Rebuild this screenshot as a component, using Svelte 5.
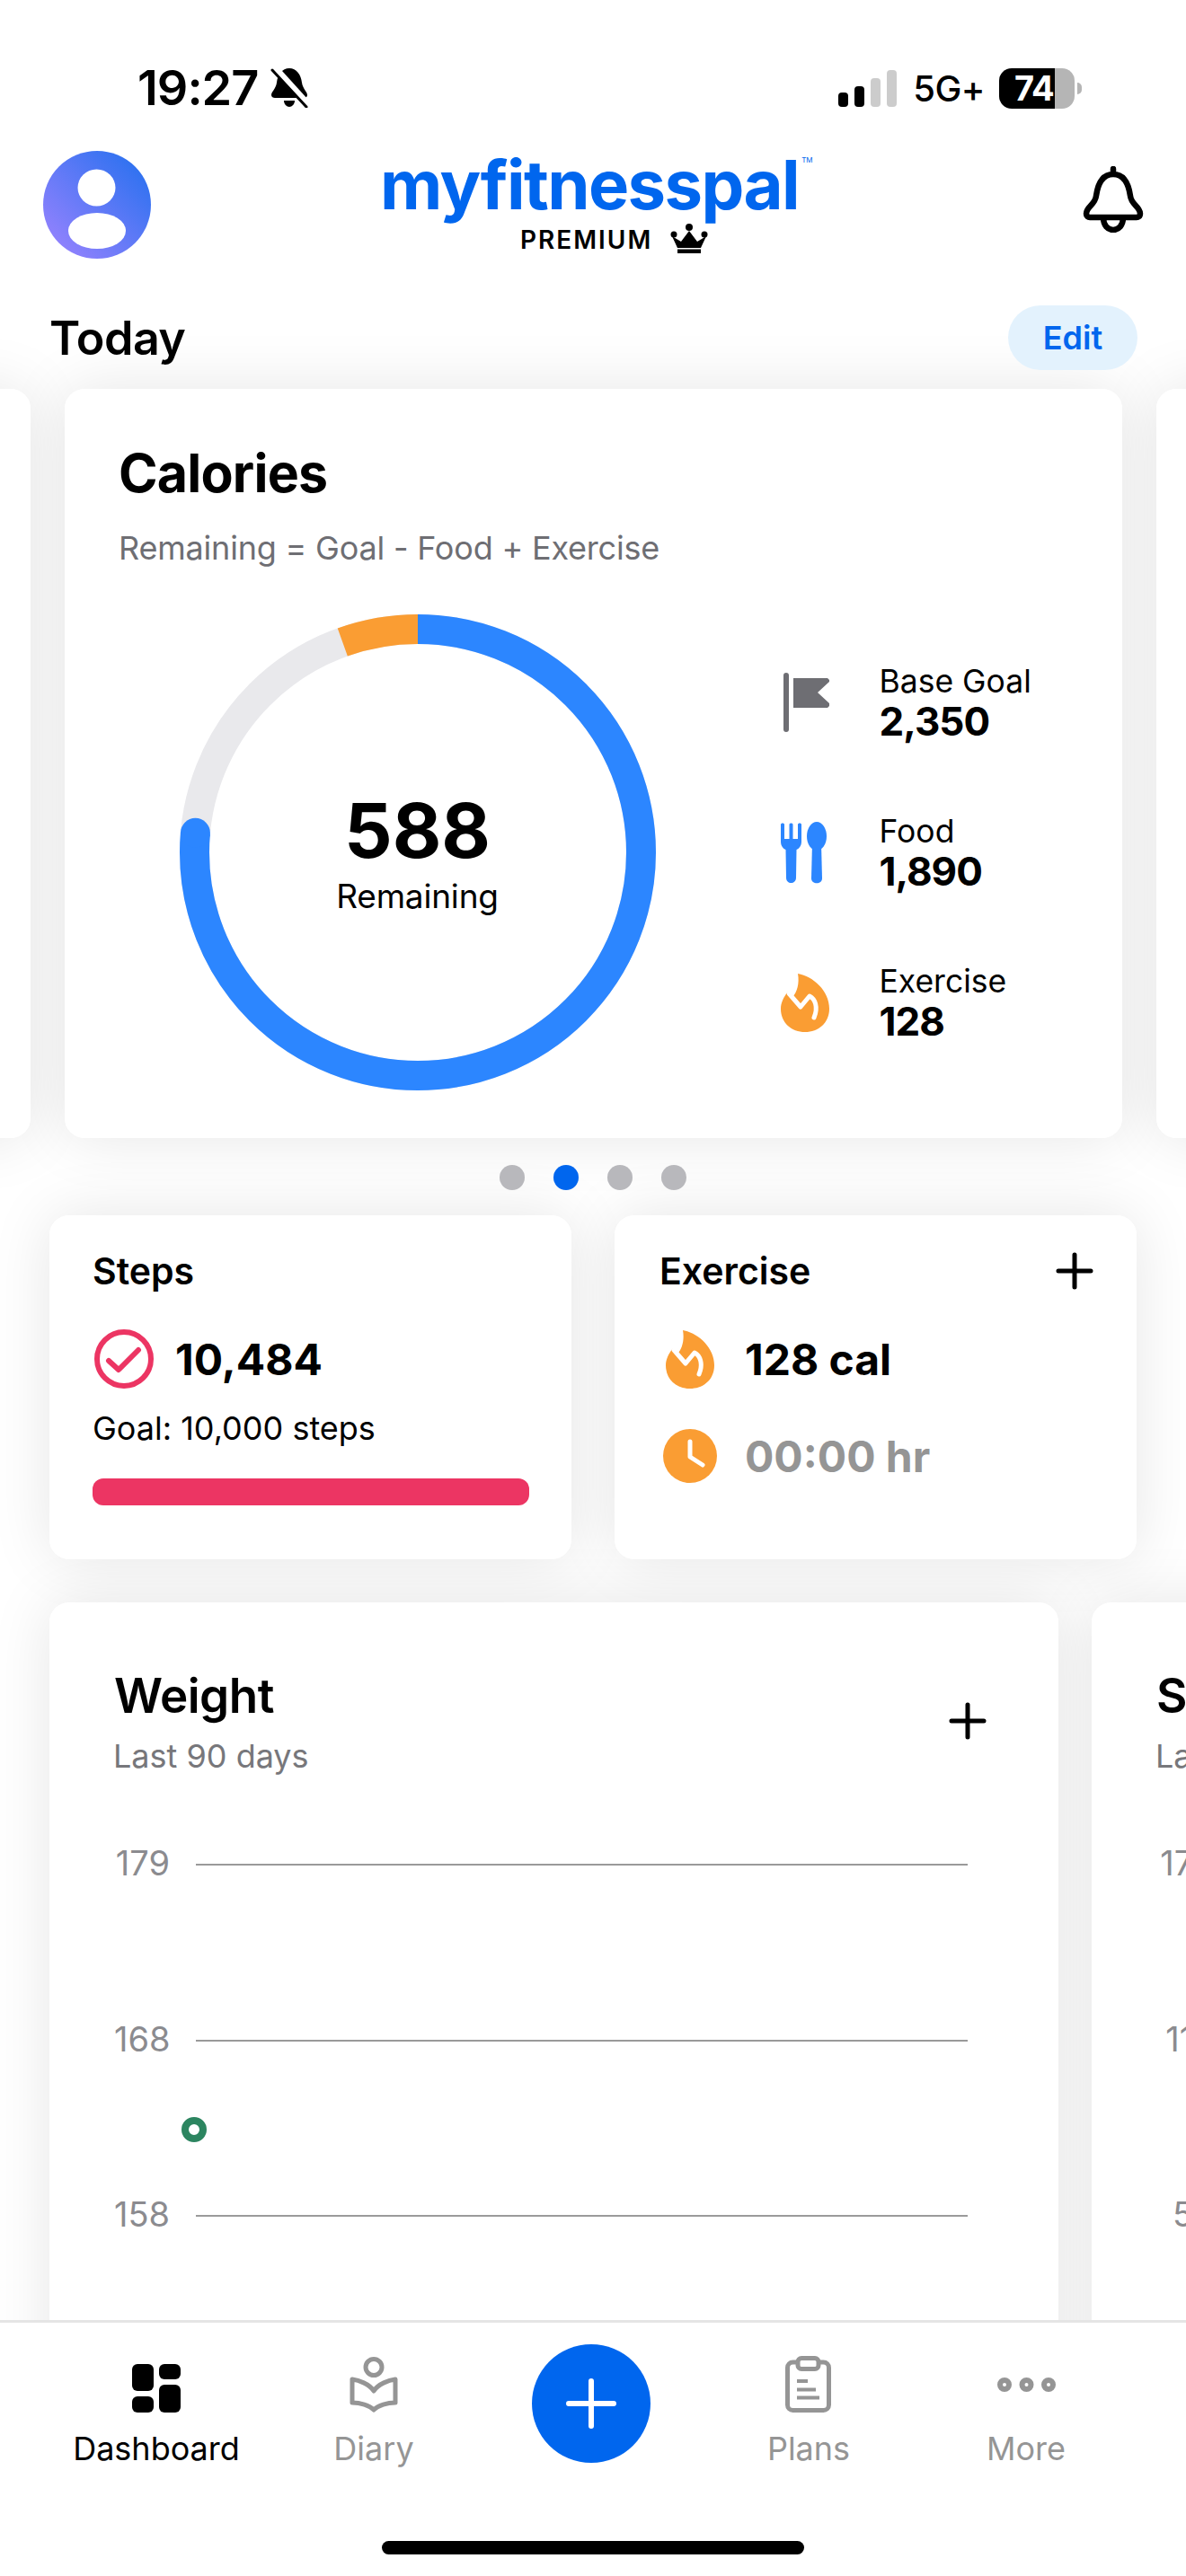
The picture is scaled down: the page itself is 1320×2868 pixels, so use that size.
<script>
  const stats = [
    { label: "Base Goal", value: "2,350", icon: "flag" },
    { label: "Food", value: "1,890", icon: "food" },
    { label: "Exercise", value: "128", icon: "flame" },
  ];
  const tabsLeft = [
    { label: "Dashboard", icon: "dash", active: true },
    { label: "Diary", icon: "diary" },
  ];
  const tabsRight = [
    { label: "Plans", icon: "plans" },
    { label: "More", icon: "more" },
  ];
  const charts = [
    { title: "Weight", ticks: ["179", "168", "158"], dot: true },
    { title: "Steps", ticks: ["17k", "11k", "5k"], dot: false },
  ];

  // ring geometry
  const r = 248.5;
  const blueEnd = 275;
  const orangeLen = 19.7;
  const capX = 265 + r * Math.sin((blueEnd * Math.PI) / 180);
  const capY = 265 - r * Math.cos((blueEnd * Math.PI) / 180);
</script>

{#snippet flame()}
  <svg width="54" height="66" viewBox="0 0 54 66">
    <path fill="#fa9d33" d="M19 1C36 4 54 20 54 40C54 56 42 66 27 66C12 66 0 56 0 40C0 34 3 27 8 21L13 27C18 22 21 12 19 1Z" />
    <path fill="none" stroke="#fff" stroke-width="5" stroke-linecap="round" stroke-linejoin="round" d="M9 23L22 38L32 26C38 29 42 38 37 50" />
  </svg>
{/snippet}

{#snippet plus()}
  <svg width="42" height="42" viewBox="0 0 42 42">
    <path fill="none" stroke="#000" stroke-width="5" stroke-linecap="round" d="M21 3V39M3 21H39" />
  </svg>
{/snippet}

<div class="app">
  <div class="scroll">
    <div class="status">
      <span class="time">19:27</span>
      <svg class="mute" width="42" height="45" viewBox="0 0 42 45">
        <path d="M21 1C13 1 8 8 7 17C6 24 1 27 1 31C1 33 3 34 5 34H37C39 34 41 33 41 31C41 27 36 24 35 17C34 8 29 1 21 1Z" />
        <path d="M15 37H27C27 41 24 44 21 44C18 44 15 41 15 37Z" />
        <path stroke="#fff" stroke-width="8" d="M4 0L42 42" />
        <path stroke="#000" stroke-width="3" stroke-linecap="round" d="M2 3L40 44" />
      </svg>
      <div class="status-right">
        <svg width="65" height="41" viewBox="0 0 65 41">
          <rect x="0" y="25" width="11" height="16" rx="4" />
          <rect x="18" y="18" width="11" height="23" rx="4" />
          <rect x="36" y="9" width="11" height="32" rx="4" fill="#ccc" />
          <rect x="54" y="0" width="11" height="41" rx="4" fill="#ccc" />
        </svg>
        <span class="net">5G+</span>
        <div class="battery"><span>74</span></div>
        <div class="nub"></div>
      </div>
    </div>

    <header class="top">
      <svg class="avatar" width="120" height="120" viewBox="0 0 120 120">
        <defs>
          <linearGradient id="av" x1="1" y1="0" x2="0" y2="1">
            <stop offset="0" stop-color="#1f6fee" />
            <stop offset="1" stop-color="#a084ff" />
          </linearGradient>
        </defs>
        <circle cx="60" cy="60" r="60" fill="url(#av)" />
        <ellipse cx="59.5" cy="41" rx="21" ry="20.5" fill="#fff" />
        <ellipse cx="60" cy="89" rx="32" ry="20" fill="#fff" />
      </svg>
      <div class="brand">
        <div class="logo">myfitnesspal<sup>TM</sup></div>
        <div class="premium">
          <span>PREMIUM</span>
          <svg width="42" height="33" viewBox="0 0 42 33">
            <path d="M8 27L2 14L12 20L21 8L30 20L40 14L34 27Z" />
            <rect x="8" y="28.5" width="26" height="4.5" />
            <circle cx="21" cy="4" r="4" />
            <circle cx="4" cy="12" r="3.5" />
            <circle cx="38" cy="12" r="3.5" />
          </svg>
        </div>
      </div>
      <svg class="bell" width="68" height="74" viewBox="0 0 68 74">
        <path fill="none" stroke="#000" stroke-width="6.5" stroke-linecap="round" stroke-linejoin="round"
          d="M34 3V9M34 9C22 9 17 19 15 33C14 43 4 45 4 53C4 56 6 57 8 57H60C62 57 64 56 64 53C64 45 54 43 53 33C51 19 46 9 34 9ZM23 57C23 66 28 71 34 71C40 71 45 66 45 57" />
      </svg>
    </header>

    <div class="today">
      <h2>Today</h2>
      <div class="edit">Edit</div>
    </div>

    <div class="carousel">
      <div class="card side"></div>
      <section class="card calories">
        <h1>Calories</h1>
        <p class="formula">Remaining = Goal - Food + Exercise</p>
        <div class="cal-body">
          <div class="ring">
            <svg width="530" height="530" viewBox="0 0 530 530">
              <circle cx="265" cy="265" {r} fill="none" stroke="#e9e9ec" stroke-width="33" />
              <g transform="rotate(-90 265 265)" fill="none" stroke-width="33">
                <circle cx="265" cy="265" {r} pathLength="360" stroke="#fa9d33"
                  stroke-dasharray="{orangeLen} 360" stroke-dashoffset={orangeLen - 360} />
                <circle cx="265" cy="265" {r} pathLength="360" stroke="#2c86ff"
                  stroke-dasharray="{blueEnd} 360" />
              </g>
              <circle cx={capX} cy={capY} r="16.5" fill="#2c86ff" />
            </svg>
            <div class="ring-text">
              <div class="big">588</div>
              <div class="rem">Remaining</div>
            </div>
          </div>
          <div class="stats">
            {#each stats as s}
              <div class="stat">
                <div class="stat-icon">
                  {#if s.icon === "flag"}
                    <svg width="54" height="66" viewBox="0 0 54 66">
                      <rect x="3" y="0" width="6" height="66" rx="3" fill="#6e6e73" />
                      <path fill="#6e6e73" d="M14 6H52L54 8V10L41 22L54 34V37L52 39H14Z" />
                    </svg>
                  {:else if s.icon === "food"}
                    <svg width="54" height="69" viewBox="0 0 54 69">
                      <path fill="#2c86ff" d="M0 3C0 1 4 1 4 3V19H9.5V3C9.5 1 13.5 1 13.5 3V19H19V3C19 1 23 1 23 3V22C23 27 20 30 17.500 31L17 62C17 70 6 70 6 62L5.500 31C3 30 0 27 0 22Z" />
                      <ellipse cx="40" cy="16" rx="11" ry="16" fill="#2c86ff" />
                      <path fill="#2c86ff" d="M35 24H45L46 63C46 70 34 70 34 63Z" />
                    </svg>
                  {:else}
                    {@render flame()}
                  {/if}
                </div>
                <div class="stat-text">
                  <div class="stat-label">{s.label}</div>
                  <div class="stat-value">{s.value}</div>
                </div>
              </div>
            {/each}
          </div>
        </div>
      </section>
      <div class="card side"></div>
    </div>

    <div class="dots">
      <i></i><i class="on"></i><i></i><i></i>
    </div>

    <div class="pair">
      <section class="card small steps">
        <h3>Steps</h3>
        <div class="metric">
          <svg width="66" height="66" viewBox="0 0 66 66">
            <circle cx="33" cy="33" r="30" fill="none" stroke="#ec3563" stroke-width="6" />
            <path fill="none" stroke="#ec3563" stroke-width="6" stroke-linecap="round" stroke-linejoin="round" d="M16 35L27 45L49 23" />
          </svg>
          <span>10,484</span>
        </div>
        <p class="goal">Goal: 10,000 steps</p>
        <div class="bar"></div>
      </section>
      <section class="card small exercise">
        <div class="small-head">
          <h3>Exercise</h3>
          {@render plus()}
        </div>
        <div class="ex-row first">
          <div class="ex-icon">{@render flame()}</div>
          <span>128 cal</span>
        </div>
        <div class="ex-row second">
          <div class="ex-icon">
            <svg width="60" height="60" viewBox="0 0 60 60">
              <circle cx="30" cy="30" r="30" fill="#fa9d33" />
              <path fill="none" stroke="#fff" stroke-width="5" stroke-linecap="round" stroke-linejoin="round" d="M30 14V31L44 40" />
            </svg>
          </div>
          <span class="muted">00:00 hr</span>
        </div>
      </section>
    </div>

    <div class="charts">
      {#each charts as c}
        <section class="card chart-card">
          <div class="chart-head">
            <div>
              <h2 class="chart-title">{c.title}</h2>
              <p class="chart-sub">Last 90 days</p>
            </div>
            {@render plus()}
          </div>
          <div class="chart">
            {#each c.ticks as t}
              <div class="tick"><span>{t}</span><div class="rule"></div></div>
            {/each}
            {#if c.dot}<div class="point"></div>{/if}
          </div>
        </section>
      {/each}
    </div>
  </div>

  <nav class="tabbar">
    <div class="tabs">
      {#each tabsLeft as t}
        <div class="tab" class:active={t.active}>
          <div class="tab-icon">
            {#if t.icon === "dash"}
              <svg width="54" height="54" viewBox="0 0 54 54">
                <rect x="0" y="0" width="24" height="30" rx="6" />
                <rect x="0" y="36" width="24" height="18" rx="6" />
                <rect x="30" y="0" width="24" height="17" rx="6" />
                <rect x="30" y="23" width="24" height="31" rx="6" />
              </svg>
            {:else}
              <svg width="54" height="62" viewBox="0 0 54 62">
                <circle cx="27" cy="11.500" r="9" fill="none" stroke="#959595" stroke-width="5" />
                <path fill="none" stroke="#959595" stroke-width="5" stroke-linejoin="round" d="M3 25C10 26 22 30 27 38C32 30 44 26 51 25V51C42 51 32 54 27 59C22 54 12 51 3 51Z" />
              </svg>
            {/if}
          </div>
          <span>{t.label}</span>
        </div>
      {/each}
      <div class="fab">
        <svg width="56" height="56" viewBox="0 0 56 56">
          <path fill="none" stroke="#fff" stroke-width="6" stroke-linecap="round" d="M28 3V53M3 28H53" />
        </svg>
      </div>
      {#each tabsRight as t}
        <div class="tab">
          <div class="tab-icon">
            {#if t.icon === "plans"}
              <svg width="51" height="63" viewBox="0 0 51 63">
                <rect x="2.500" y="7" width="46" height="53.500" rx="6" fill="none" stroke="#959595" stroke-width="5" />
                <rect x="14" y="2.500" width="23" height="12" rx="4" fill="#fff" stroke="#959595" stroke-width="5" />
                <path stroke="#959595" stroke-width="4" d="M13 28H25M13 37.500H34M13 46.500H38" />
              </svg>
            {:else}
              <svg class="more" width="65" height="16" viewBox="0 0 65 16">
                <g fill="none" stroke="#959595" stroke-width="6">
                  <circle cx="8" cy="8" r="5" />
                  <circle cx="32.500" cy="8" r="5" />
                  <circle cx="57" cy="8" r="5" />
                </g>
              </svg>
            {/if}
          </div>
          <span>{t.label}</span>
        </div>
      {/each}
    </div>
    <div class="home"></div>
  </nav>
</div>

<style>
  :global(body) {
    margin: 0;
    background: #fff;
  }
  * {
    box-sizing: border-box;
  }
  h1, h2, h3, p {
    margin: 0;
    font: inherit;
  }
  svg {
    display: block;
    flex-shrink: 0;
  }
  .app {
    width: 1320px;
    height: 2868px;
    display: flex;
    flex-direction: column;
    overflow: hidden;
    isolation: isolate;
    background: #fff;
    color: #000;
    font-family: Inter, "Liberation Sans", sans-serif;
  }
  .scroll {
    flex: 1;
    min-height: 0;
    overflow: hidden;
  }

  .status {
    height: 168px;
    padding: 72px 116px 0 153px;
    display: flex;
    align-items: flex-start;
  }
  .time {
    font-size: 54px;
    line-height: 52px;
    font-weight: 600;
    letter-spacing: -1px;
  }
  .mute {
    margin: 3px 0 0 14px;
  }
  .status-right {
    margin-left: auto;
    display: flex;
    align-items: center;
    height: 52px;
  }
  .net {
    font-size: 40px;
    font-weight: 500;
    margin-left: 18px;
    letter-spacing: -0.5px;
  }
  .battery {
    width: 84px;
    height: 45px;
    margin-left: 16px;
    border-radius: 14px;
    background: linear-gradient(90deg, #000 62px, #b5b5b5 62px);
    color: #fff;
    font-size: 38px;
    font-weight: 700;
    display: flex;
    align-items: center;
    padding-left: 17px;
    letter-spacing: -1px;
  }
  .nub {
    width: 5px;
    height: 13px;
    margin-left: 3px;
    border-radius: 0 6px 6px 0;
    background: #b5b5b5;
  }

  .top {
    height: 120px;
    padding: 0 47px 0 48px;
    display: flex;
    align-items: flex-start;
  }
  .brand {
    margin-left: 255px;
    width: 480px;
  }
  .logo {
    color: #0066ee;
    font-size: 76px;
    line-height: 76px;
    font-weight: 700;
    letter-spacing: -1.6px;
    white-space: nowrap;
    margin-top: -1px;
  }
  .logo sup {
    font-size: 8px;
    line-height: 0;
    vertical-align: 52px;
    letter-spacing: 0;
    font-weight: 400;
    margin-left: 3px;
  }
  .premium {
    display: flex;
    align-items: flex-end;
    gap: 20px;
    margin: 6px 0 0 156px;
    font-size: 28px;
    line-height: 30px;
    font-weight: 600;
    letter-spacing: 2px;
  }
  .bell {
    margin: 17px 0 0 auto;
  }

  .today {
    margin-top: 52px;
    height: 72px;
    padding: 0 54px 0 55px;
    display: flex;
    justify-content: space-between;
    align-items: center;
  }
  .today h2 {
    font-size: 52px;
    font-weight: 600;
    letter-spacing: -0.5px;
  }
  .edit {
    width: 144px;
    height: 72px;
    border-radius: 36px;
    background: #e3f2fd;
    color: #0066ee;
    font-size: 36px;
    font-weight: 600;
    display: flex;
    align-items: center;
    justify-content: center;
  }

  .card {
    position: relative;
    background: #fff;
    border-radius: 22px;
  }
  /* shadow lives on its own layer so a later card never darkens an earlier one */
  .card::before {
    content: "";
    position: absolute;
    inset: 0;
    z-index: -1;
    border-radius: 22px;
    box-shadow: 0 0 68px rgba(0, 0, 0, 0.1);
  }
  .carousel {
    margin: 21px 0 0 -1143px;
    display: flex;
    gap: 38px;
  }
  .carousel .card {
    flex: 0 0 1177px;
    height: 834px;
  }
  .calories {
    padding: 59px 0 0 60px;
  }
  .calories h1 {
    font-size: 59px;
    line-height: 70px;
    font-weight: 700;
    letter-spacing: -0.8px;
  }
  .formula {
    margin-top: 26px;
    font-size: 36px;
    line-height: 44px;
    letter-spacing: -0.2px;
    color: #6e6e73;
  }
  .cal-body {
    margin: 52px 0 0 67.500px;
    display: flex;
    align-items: center;
    gap: 139px;
  }
  .ring {
    display: grid;
    place-items: center;
  }
  .ring > * {
    grid-area: 1 / 1;
  }
  .ring-text {
    text-align: center;
  }
  .big {
    font-size: 84px;
    line-height: 92px;
    font-weight: 700;
  }
  .rem {
    font-size: 37px;
    line-height: 44px;
    margin-top: 5px;
    letter-spacing: -0.2px;
  }
  .stats {
    display: flex;
    flex-direction: column;
    gap: 82px;
  }
  .stat {
    display: flex;
    align-items: center;
  }
  .stat-icon {
    width: 110px;
  }
  .stat-text {
    margin-top: -4px;
  }
  .stat-label {
    font-size: 35.500px;
    line-height: 45px;
  }
  .stat-value {
    font-size: 44px;
    line-height: 44px;
    font-weight: 700;
    letter-spacing: -1px;
  }

  .dots {
    margin-top: 30px;
    display: flex;
    justify-content: center;
    gap: 32px;
  }
  .dots i {
    width: 28px;
    height: 28px;
    border-radius: 50%;
    background: #b8b8bc;
  }
  .dots .on {
    background: #0066ee;
  }

  .pair {
    margin-top: 28px;
    padding-left: 55px;
    display: grid;
    grid-template-columns: 581px 581px;
    gap: 48px;
  }
  .small {
    height: 383px;
    padding: 38px 48px 0;
  }
  .small h3 {
    font-size: 41px;
    line-height: 48px;
    font-weight: 600;
  }
  .metric {
    margin: 41px 0 0 2px;
    display: flex;
    align-items: center;
    gap: 24px;
    font-size: 48px;
    font-weight: 700;
  }
  .goal {
    margin-top: 24px;
    font-size: 36px;
    line-height: 40px;
  }
  .bar {
    margin-top: 36px;
    height: 30px;
    width: 486px;
    border-radius: 12px;
    background: #ec3563;
  }
  .exercise {
    padding: 38px 48px 0 50px;
  }
  .small-head {
    display: flex;
    justify-content: space-between;
    align-items: center;
  }
  .ex-row {
    margin-left: 4px;
    display: flex;
    align-items: center;
    gap: 31px;
    font-size: 48px;
    font-weight: 700;
  }
  .ex-row.first {
    margin-top: 41px;
  }
  .ex-row.second {
    margin-top: 45px;
  }
  .ex-icon {
    width: 60px;
    display: flex;
    justify-content: center;
  }
  .muted {
    color: #959595;
  }

  .charts {
    margin-top: 48px;
    padding-left: 55px;
    display: flex;
    gap: 37px;
  }
  .chart-card {
    flex: 0 0 1123px;
    height: 1000px;
    padding: 71px 80px 0 72px;
  }
  .chart-head {
    display: flex;
    justify-content: space-between;
    align-items: center;
  }
  .chart-title {
    font-size: 53px;
    line-height: 66px;
    font-weight: 600;
    letter-spacing: -0.5px;
  }
  .chart-sub {
    margin: 12px 0 0 -1px;
    font-size: 36px;
    line-height: 44px;
    color: #77777b;
  }
  .chart {
    position: relative;
    margin-top: 75px;
    display: flex;
    flex-direction: column;
    gap: 151.500px;
  }
  .tick {
    display: flex;
    align-items: center;
    height: 44px;
    gap: 29px;
    font-size: 38px;
    color: #8b8b8f;
  }
  .tick span {
    width: 62px;
    flex-shrink: 0;
    white-space: nowrap;
    text-align: right;
  }
  .rule {
    flex: 0 0 859px;
    height: 2px;
    margin-top: 4px;
    background: #9a9a9a;
  }
  .point {
    position: absolute;
    left: 75px;
    top: 305px;
    width: 28px;
    height: 28px;
    border-radius: 50%;
    border: 8px solid #2c8560;
    background: #fff;
  }

  .tabbar {
    flex: 0 0 285px;
    border-top: 3px solid #e5e5e5;
    background: #fff;
    position: relative;
  }
  .tabs {
    height: 243px;
    padding-left: 53px;
    display: grid;
    grid-template-columns: repeat(5, 242px);
    align-items: start;
    justify-items: center;
  }
  .tab {
    display: flex;
    flex-direction: column;
    align-items: center;
    color: #959595;
    font-size: 36px;
    line-height: 44px;
  }
  .tab.active {
    color: #000;
  }
  .tab-icon {
    height: 100px;
    display: flex;
    align-items: flex-end;
  }
  .more {
    margin-bottom: 23px;
  }
  .tab span {
    margin-top: 18px;
  }
  .fab {
    margin-top: 24px;
    width: 132px;
    height: 132px;
    border-radius: 50%;
    background: #0066ee;
    display: flex;
    align-items: center;
    justify-content: center;
  }
  .home {
    width: 470px;
    height: 15px;
    margin: 0 auto;
    border-radius: 8px;
    background: #000;
  }
</style>
